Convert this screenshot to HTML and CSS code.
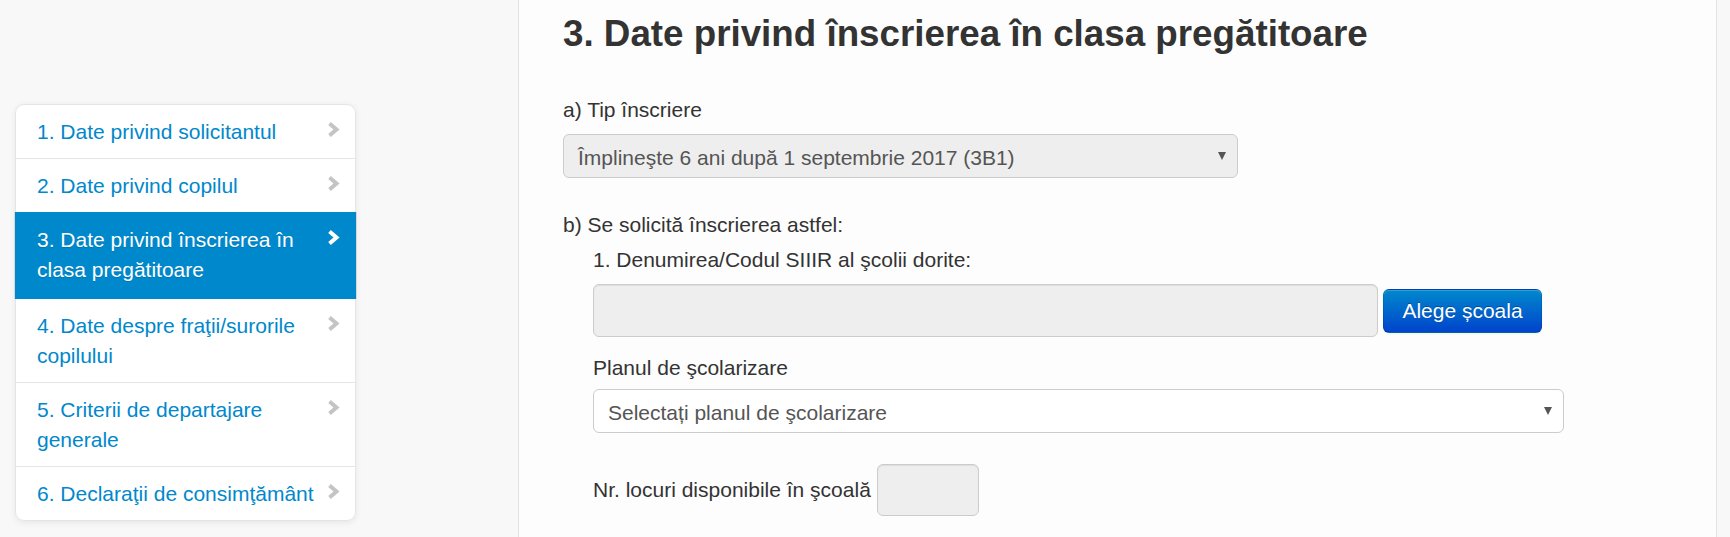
FILE: index.html
```html
<!DOCTYPE html>
<html lang="ro">
<head>
<meta charset="utf-8">
<title>Date privind înscrierea în clasa pregătitoare</title>
<link rel="stylesheet" href="styles.css">
</head>
<body>
<div class="layout">
  <aside class="sidebar">
    <ul class="sidenav">
      <li><a href="#"><span class="nav-text">1. Date privind solicitantul</span><svg class="chev" viewBox="0 0 13 15"><polyline points="2.5,1.5 9.5,7.5 2.5,13.5"/></svg></a></li>
      <li><a href="#"><span class="nav-text">2. Date privind copilul</span><svg class="chev" viewBox="0 0 13 15"><polyline points="2.5,1.5 9.5,7.5 2.5,13.5"/></svg></a></li>
      <li><a href="#" class="active"><span class="nav-text">3. Date privind înscrierea în clasa pregătitoare</span><svg class="chev" viewBox="0 0 13 15"><polyline points="2.5,1.5 9.5,7.5 2.5,13.5"/></svg></a></li>
      <li><a href="#"><span class="nav-text">4. Date despre fraţii/surorile copilului</span><svg class="chev" viewBox="0 0 13 15"><polyline points="2.5,1.5 9.5,7.5 2.5,13.5"/></svg></a></li>
      <li><a href="#"><span class="nav-text">5. Criterii de departajare generale</span><svg class="chev" viewBox="0 0 13 15"><polyline points="2.5,1.5 9.5,7.5 2.5,13.5"/></svg></a></li>
      <li><a href="#"><span class="nav-text">6. Declaraţii de consimţământ</span><svg class="chev" viewBox="0 0 13 15"><polyline points="2.5,1.5 9.5,7.5 2.5,13.5"/></svg></a></li>
    </ul>
  </aside>
  <main class="main">
    <h3 class="title">3. Date privind înscrierea în clasa pregătitoare</h3>

    <div class="label label-a">a) Tip înscriere</div>
    <div class="select select-disabled select-a">
      <span>Împlineşte 6 ani după 1 septembrie 2017 (3B1)</span>
      <svg class="caret" viewBox="0 0 8 8"><polygon points="0,0 8,0 4,8"/></svg>
    </div>

    <div class="label label-b">b) Se solicită înscrierea astfel:</div>
    <div class="sub">
      <div class="label label-school">1. Denumirea/Codul SIIIR al şcolii dorite:</div>
      <div class="school-row">
        <div class="input input-school"></div>
        <button class="btn-primary" type="button">Alege școala</button>
      </div>

      <div class="label label-plan">Planul de şcolarizare</div>
      <div class="select select-plan">
        <span>Selectați planul de şcolarizare</span>
        <svg class="caret" viewBox="0 0 8 8"><polygon points="0,0 8,0 4,8"/></svg>
      </div>

      <div class="places-row">
        <span class="places-text">Nr. locuri disponibile în şcoală</span>
        <div class="input input-places"></div>
      </div>
    </div>
  </main>
</div>
</body>
</html>
```

FILE: styles.css
```css
html, body {
  margin: 0;
  padding: 0;
}

body {
  background: #f8f8f8;
  font-family: "Liberation Sans", Arial, Helvetica, sans-serif;
  font-size: 21px;
  line-height: 30px;
  color: #333;
  height: 537px;
  overflow: hidden;
}

.layout {
  display: flex;
  height: 537px;
}

.sidebar {
  flex: 0 0 518px;
  border-right: 1px solid #e3e3e3;
  padding: 104px 0 0 15px;
  box-sizing: border-box;
  width: 519px;
  flex-basis: 519px;
}

.sidenav {
  list-style: none;
  margin: 0;
  padding: 0;
  width: 341px;
  background: #fff;
  border-radius: 9px;
  box-shadow: 0 1.5px 6px rgba(0, 0, 0, 0.07);
}

.sidenav a {
  display: flex;
  align-items: flex-start;
  justify-content: space-between;
  padding: 12px 15px 11px 21px;
  margin-bottom: -1px;
  border: 1px solid #e5e5e5;
  color: #0088cc;
  text-decoration: none;
  position: relative;
  background: #fff;
}

.sidenav li:first-child a {
  border-radius: 9px 9px 0 0;
}

.sidenav li:last-child a {
  border-radius: 0 0 9px 9px;
  margin-bottom: 0;
}

.nav-text {
  width: 290px;
}

.chev {
  flex: 0 0 13px;
  width: 13px;
  height: 15px;
  margin-top: 5px;
  fill: none;
  stroke: #c4c4c4;
  stroke-width: 4;
}

.sidenav a.active {
  background: #0088cc;
  color: #fff;
  border: 0;
  padding: 13px 16px 14px 22px;
  z-index: 2;
  text-shadow: 0 1px 0 rgba(0, 0, 0, 0.15);
  box-shadow: 1px 0 0 rgba(0, 0, 0, 0.1), -1px 0 0 rgba(0, 0, 0, 0.1);
}

.sidenav a.active .chev {
  stroke: #fff;
}

.main {
  flex: 0 0 1198px;
  box-sizing: border-box;
  background: #fdfdfd;
  border-right: 1px solid #e3e3e3;
  padding: 12px 0 0 44px;
}

.title {
  margin: 0;
  font-size: 36.75px;
  line-height: 44px;
  font-weight: bold;
  color: #333;
}

.label {
  line-height: 30px;
}

.label-a {
  margin-top: 39px;
  margin-bottom: 9px;
}

.select {
  box-sizing: border-box;
  height: 44px;
  border: 1px solid #ccc;
  border-radius: 6px;
  display: flex;
  align-items: center;
  justify-content: space-between;
  padding: 0 11px 0 14px;
  color: #555;
  background: #fff;
}

.select span {
  line-height: 30px;
  margin-top: 3px;
}

.select-disabled {
  background: #eee;
}

.select-a {
  width: 675px;
}

.caret {
  width: 8px;
  height: 8px;
  fill: #555;
}

.label-b {
  margin-top: 32px;
  margin-bottom: 5px;
}

.sub {
  margin-left: 30px;
}

.label-school {
  margin-bottom: 9px;
}

.school-row {
  display: flex;
  align-items: center;
  gap: 5px;
}

.input {
  box-sizing: border-box;
  background: #eee;
  border: 1px solid #ccc;
  border-radius: 6px;
  box-shadow: inset 0 1px 1px rgba(0, 0, 0, 0.075);
}

.input-school {
  width: 785px;
  height: 53px;
}

.btn-primary {
  box-sizing: border-box;
  width: 159px;
  height: 44px;
  font-family: inherit;
  font-size: 21px;
  line-height: 30px;
  color: #fff;
  text-shadow: 0 -1px 0 rgba(0, 0, 0, 0.25);
  background: linear-gradient(to bottom, #0088cc, #0044cc);
  border: 1px solid #0044b3;
  border-color: rgba(0, 0, 0, 0.1) rgba(0, 0, 0, 0.1) rgba(0, 0, 0, 0.25);
  border-radius: 6px;
  padding: 0;
  box-shadow: inset 0 1px 0 rgba(255, 255, 255, 0.2), 0 1px 2px rgba(0, 0, 0, 0.05);
}

.label-plan {
  margin-top: 16px;
  margin-bottom: 6px;
}

.select-plan {
  width: 971px;
}

.places-row {
  display: flex;
  align-items: center;
  gap: 6px;
  margin-top: 31px;
}

.input-places {
  width: 102px;
  height: 52px;
}
```
